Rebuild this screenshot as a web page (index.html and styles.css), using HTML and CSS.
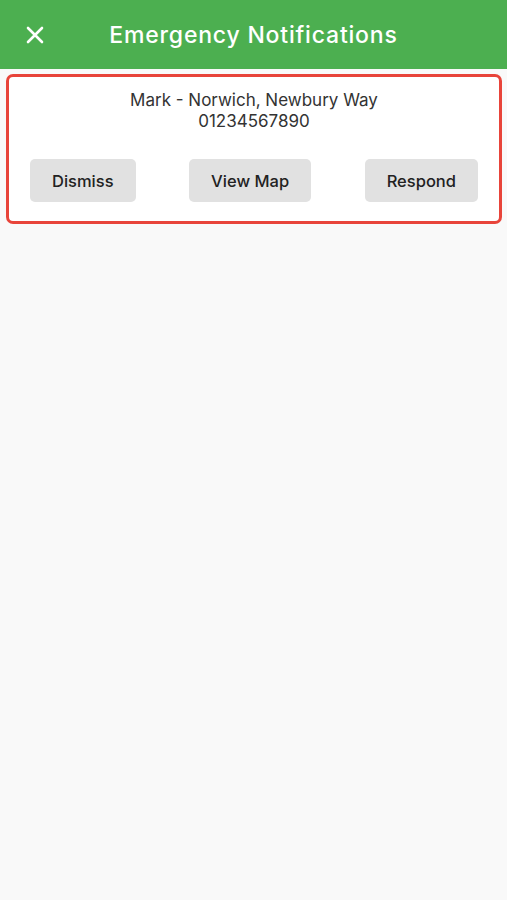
FILE: index.html
```html
<!DOCTYPE html>
<html>
<head>
    <title>Emergency Notifications</title>
    <link rel="stylesheet" href="styles.css">
</head>
<body>
    <header class="topbar">
        <button class="close-btn" aria-label="Close">
            <svg width="18" height="18" viewBox="0 0 18 18">
                <path d="M2 2 L16 16 M16 2 L2 16" stroke="#fff" stroke-width="2.6" stroke-linecap="round"/>
            </svg>
        </button>
        <h1 class="title">Emergency Notifications</h1>
    </header>
    <div class="list">
        <div class="alert-card">
            <p class="alert-name">Mark - Norwich, Newbury Way</p>
            <p class="alert-phone">01234567890</p>
            <div class="actions">
                <button class="action">Dismiss</button>
                <button class="action">View Map</button>
                <button class="action">Respond</button>
            </div>
        </div>
    </div>
</body>
</html>
```

FILE: styles.css
```css
body {
    font-family: Inter, "Liberation Sans", Arial, sans-serif;
    background-color: #f9f9f9;
    margin: 0;
    padding: 0;
    height: 900px;
}
.topbar {
    background-color: #4caf50;
    height: 69px;
    display: flex;
    align-items: center;
    position: relative;
}
.close-btn {
    background: none;
    border: none;
    padding: 0;
    margin-left: 26px;
    width: 18px;
    height: 18px;
    display: flex;
    cursor: pointer;
}
.title {
    position: absolute;
    left: 0;
    right: 0;
    margin: 0;
    text-align: center;
    color: #fff;
    font-size: 23px;
    font-weight: 500;
    letter-spacing: 0.8px;
    pointer-events: none;
}
.list {
    padding: 5px 5px 0 6px;
}
.alert-card {
    background-color: #fff;
    border: 3px solid #e8443a;
    border-radius: 7px;
    padding: 13px 21px 19px 21px;
    text-align: center;
}
.alert-name,
.alert-phone {
    margin: 0;
    color: #333;
    font-size: 17px;
    line-height: 21px;
}
.actions {
    display: flex;
    justify-content: space-between;
    margin-top: 27px;
}
.action {
    background-color: #e1e1e1;
    border: none;
    border-radius: 5px;
    height: 43px;
    padding: 0 22px;
    font-family: inherit;
    font-size: 16.5px;
    font-weight: 500;
    color: #222;
    cursor: pointer;
}
```
